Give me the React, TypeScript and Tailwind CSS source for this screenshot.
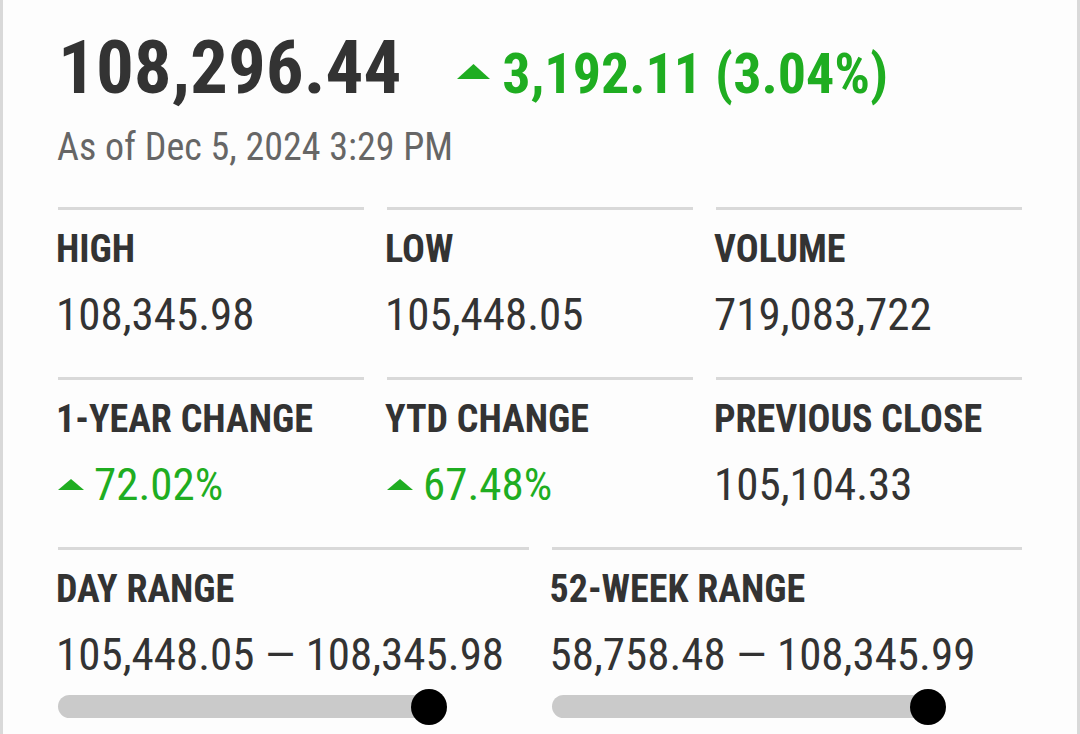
import React from 'react';

const GREEN = 'text-[#1fad21]';

function UpTriangle({ size = 'sm' }: { size?: 'sm' | 'lg' }) {
  const cls = size === 'lg' ? 'w-[33px] h-[15px]' : 'w-[26px] h-[11px]';
  return (
    <svg className={cls} viewBox="0 0 33 15" preserveAspectRatio="none" fill="#1fad21">
      <polygon points="16.5,0 33,15 0,15" />
    </svg>
  );
}

function Stat({ label, value, up }: { label: string; value: string; up?: boolean }) {
  return (
    <div className="border-t-[3px] border-[#d9d9d9] pt-5 pb-[40px]">
      <div className="-ml-[2px] text-[38px] leading-none font-bold text-[#333]">{label}</div>
      <div className={`mt-[24px] flex items-center text-[45px] leading-none ${up ? GREEN : 'text-[#333]'}`}>
        {up && (
          <span className="mr-[10px] flex items-center">
            <UpTriangle />
          </span>
        )}
        <span className={up ? '' : '-ml-[2px]'}>{value}</span>
      </div>
    </div>
  );
}

function Range({ label, low, high, pct }: { label: string; low: string; high: string; pct: number }) {
  return (
    <div className="border-t-[3px] border-[#d9d9d9] pt-5">
      <div className="-ml-[2px] text-[38px] leading-none font-bold text-[#333]">{label}</div>
      <div className="-ml-[2px] mt-[24px] text-[45px] leading-none text-[#333]">
        {low} — {high}
      </div>
      <div className="relative mt-[18px] h-[23px] w-[377px] rounded-full bg-[#cacaca]">
        <div
          className="absolute top-1/2 h-[36px] w-[36px] -translate-x-1/2 -translate-y-1/2 rounded-full bg-black"
          style={{ left: `${pct}%` }}
        />
      </div>
    </div>
  );
}

export default function App() {
  return (
    <div className="h-[734px] w-full overflow-hidden border-x-[3px] border-[#d9d9d9] bg-[#fdfdfd] pl-[55px] pr-[55px] font-['Roboto_Condensed',Roboto,sans-serif]">
      {/* Quote header */}
      <div className="flex items-baseline pt-[30px]">
        <span className="text-[75px] leading-none font-bold text-[#333]">108,296.44</span>
        <span className="ml-[56px] mr-[12px] flex self-center pt-[8px]">
          <UpTriangle size="lg" />
        </span>
        <span className={`text-[56px] leading-none font-bold ${GREEN}`}>3,192.11 (3.04%)</span>
      </div>
      <div className="-ml-[1px] mt-[23px] text-[38px] leading-none text-[#666]">As of Dec 5, 2024 3:29 PM</div>

      {/* Stats */}
      <div className="mt-[41px] grid grid-cols-3 gap-x-[23px]">
        <Stat label="HIGH" value="108,345.98" />
        <Stat label="LOW" value="105,448.05" />
        <Stat label="VOLUME" value="719,083,722" />
        <Stat label="1-YEAR CHANGE" value="72.02%" up />
        <Stat label="YTD CHANGE" value="67.48%" up />
        <Stat label="PREVIOUS CLOSE" value="105,104.33" />
      </div>
      <div className="grid grid-cols-2 gap-x-[23px]">
        <Range label="DAY RANGE" low="105,448.05" high="108,345.98" pct={98.3} />
        <Range label="52-WEEK RANGE" low="58,758.48" high="108,345.99" pct={99.9} />
      </div>
    </div>
  );
}
